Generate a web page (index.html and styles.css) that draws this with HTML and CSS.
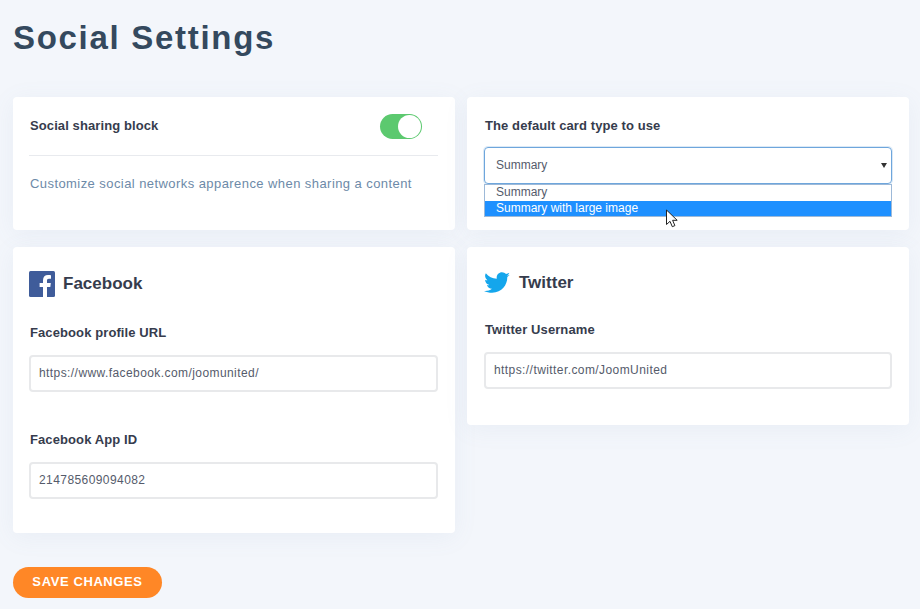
FILE: index.html
```html
<!DOCTYPE html>
<html lang="en">
<head>
  <meta charset="UTF-8">
  <title>Social Settings</title>
  <link rel="stylesheet" href="styles.css">
</head>
<body>
  <h1 class="page-title">Social Settings</h1>

  <div class="columns">
    <div class="column column-left">
      <!-- sharing block -->
      <div class="card card-sharing">
        <div class="toggle-row">
          <span class="label">Social sharing block</span>
          <span class="toggle"><span class="knob"></span></span>
        </div>
        <p class="desc">Customize social networks apparence when sharing a content</p>
      </div>

      <!-- facebook -->
      <div class="card card-facebook">
        <div class="network">
          <svg class="fb-icon" width="26" height="26" viewBox="0 0 26 26">
            <rect width="26" height="26" rx="1.5" fill="#3f5c9a"/>
            <path d="M18 26V16h3.300l.5-3.900H18V9.600c0-1.100.3-1.900 1.900-1.900H22V4.200c-.4 0-1.600-.2-3-.2-3 0-5 1.800-5 5.200v2.900h-3.400V16H14v10z" fill="#fff"/>
          </svg>
          <span class="network-name">Facebook</span>
        </div>
        <label class="label field-label">Facebook profile URL</label>
        <div class="input">https://www.facebook.com/joomunited/</div>
        <label class="label field-label second">Facebook App ID</label>
        <div class="input">214785609094082</div>
      </div>
    </div>

    <div class="column">
      <!-- card type -->
      <div class="card card-type">
        <label class="label">The default card type to use</label>
        <div class="select-wrap">
          <div class="select">Summary<span class="arrow"></span></div>
          <ul class="options">
            <li>Summary</li>
            <li class="active">Summary with large image</li>
          </ul>
          <svg class="cursor" width="14" height="20" viewBox="0 0 14 20">
            <path d="M1.500 1v14.500l3.500-3.200 2.300 5.400 2.600-1.100-2.300-5.300h4.600z" fill="#fff" stroke="#222" stroke-width="1"/>
          </svg>
        </div>
      </div>

      <!-- twitter -->
      <div class="card card-twitter">
        <div class="network">
          <svg class="tw-icon" width="26" height="22" viewBox="0 0 24 20">
            <path d="M24 2.400c-.9.400-1.800.700-2.800.800 1-.6 1.800-1.600 2.200-2.700-1 .6-2 1-3.100 1.200C19.300.7 18 0 16.600 0c-2.700 0-4.900 2.200-4.900 4.900 0 .4 0 .8.100 1.100C7.700 5.800 4.100 3.900 1.700.9c-.4.700-.7 1.600-.7 2.500 0 1.700.9 3.200 2.200 4.100-.8 0-1.600-.2-2.200-.6v.1c0 2.400 1.700 4.400 3.900 4.800-.4.100-.8.200-1.300.2-.3 0-.6 0-.9-.1.600 2 2.400 3.400 4.600 3.400-1.700 1.300-3.800 2.100-6.100 2.100-.4 0-.8 0-1.200-.1C2.200 18.300 4.800 19 7.500 19c9.100 0 14-7.500 14-14v-.6c1-.7 1.800-1.600 2.500-2z" fill="#14a6ec"/>
          </svg>
          <span class="network-name">Twitter</span>
        </div>
        <label class="label field-label">Twitter Username</label>
        <div class="input">https://twitter.com/JoomUnited</div>
      </div>
    </div>
  </div>

  <button class="save-btn">SAVE CHANGES</button>
</body>
</html>
```

FILE: styles.css
```css
body {
  margin: 0;
  height: 609px;
  overflow: hidden;
  box-sizing: border-box;
  padding: 0 11px 0 13px;
  background: #f3f6fb;
  font-family: "Liberation Sans", Arial, sans-serif;
  color: #363c4d;
}
.page-title {
  margin: 0;
  padding-top: 19px;
  height: 97px;
  box-sizing: border-box;
  font-size: 33px;
  line-height: 38px;
  font-weight: 700;
  letter-spacing: 1.7px;
  color: #34495e;
}
.columns {
  display: flex;
  gap: 12px;
  align-items: flex-start;
}
.column {
  width: 442px;
  display: flex;
  flex-direction: column;
  gap: 17px;
}
.card {
  background: #fff;
  border-radius: 4px;
  box-sizing: border-box;
  padding: 0 17px;
  box-shadow: 0 4px 24px rgba(120, 140, 180, 0.08);
}
.column-left .card {
  padding-left: 16px;
}
.label {
  display: block;
  font-size: 13px;
  line-height: 16px;
  font-weight: 700;
  letter-spacing: 0.1px;
  color: #363c4d;
}
/* sharing block */
.card-sharing {
  height: 133px;
}
.toggle-row {
  height: 58px;
  border-bottom: 1px solid #e8eaee;
  display: flex;
  justify-content: space-between;
  align-items: center;
}
.toggle-row .label {
  margin-left: 1px;
}
.toggle {
  width: 42px;
  height: 25px;
  margin-right: 16px;
  border-radius: 13px;
  background: #5cc96f;
  box-sizing: border-box;
  padding: 1px;
  display: flex;
  justify-content: flex-end;
}
.knob {
  width: 23px;
  height: 23px;
  border-radius: 50%;
  background: #fff;
}
.desc {
  margin: 20px 0 0 1px;
  font-size: 13px;
  line-height: 16px;
  letter-spacing: 0.43px;
  color: #6d8aa8;
}
/* card type */
.card-type {
  height: 133px;
  padding-top: 21px;
}
.card-type .label {
  margin-left: 1px;
}
.select-wrap {
  position: relative;
  margin-top: 13px;
}
.select {
  position: relative;
  height: 37px;
  box-sizing: border-box;
  border: 1px solid #6ea6dc;
  box-shadow: 0 0 0 1px rgba(110, 166, 220, 0.25);
  border-radius: 4px;
  padding-left: 11px;
  font-size: 12px;
  line-height: 35px;
  color: #555b6b;
}
.arrow {
  position: absolute;
  right: 4px;
  top: 15px;
  border-left: 3px solid transparent;
  border-right: 3px solid transparent;
  border-top: 5px solid #333;
}
.options {
  position: absolute;
  left: 0;
  right: 0;
  top: 37px;
  margin: 0;
  padding: 0;
  list-style: none;
  height: 33px;
  box-sizing: border-box;
  border: 1px solid #9db9d8;
  background: #fff;
  font-size: 12px;
  color: #555b6b;
}
.options li {
  height: 16px;
  line-height: 15px;
  padding-left: 11px;
}
.options .active {
  height: 15px;
  background: #1e90ff;
  color: #fff;
}
.cursor {
  position: absolute;
  left: 181px;
  top: 62px;
}
/* network cards */
.card-facebook {
  height: 286px;
  padding-top: 24px;
}
.card-twitter {
  height: 178px;
  padding-top: 24px;
}
.network {
  display: flex;
  align-items: center;
  gap: 8px;
  height: 26px;
  margin-bottom: 28px;
}
.fb-icon {
  margin-top: -1px;
}
.card-twitter .network {
  margin-bottom: 27px;
  height: 24px;
  gap: 9px;
}
.field-label {
  margin-bottom: 14px;
  margin-left: 1px;
}
.field-label.second {
  margin-top: 40px;
}
.network-name {
  font-size: 17px;
  font-weight: 700;
  color: #363c4d;
}
.input {
  height: 37px;
  box-sizing: border-box;
  border: 2px solid #e8e9eb;
  border-radius: 4px;
  padding-left: 8px;
  font-size: 12px;
  line-height: 32px;
  letter-spacing: 0.42px;
  color: #555b6b;
}
.save-btn {
  display: block;
  margin-top: 34px;
  width: 149px;
  height: 31px;
  padding: 0 0 2px;
  border: none;
  border-radius: 16px;
  background: #ff8726;
  color: #fff;
  font-family: "Liberation Sans", Arial, sans-serif;
  font-size: 13px;
  font-weight: 700;
  letter-spacing: 0.6px;
}
```
